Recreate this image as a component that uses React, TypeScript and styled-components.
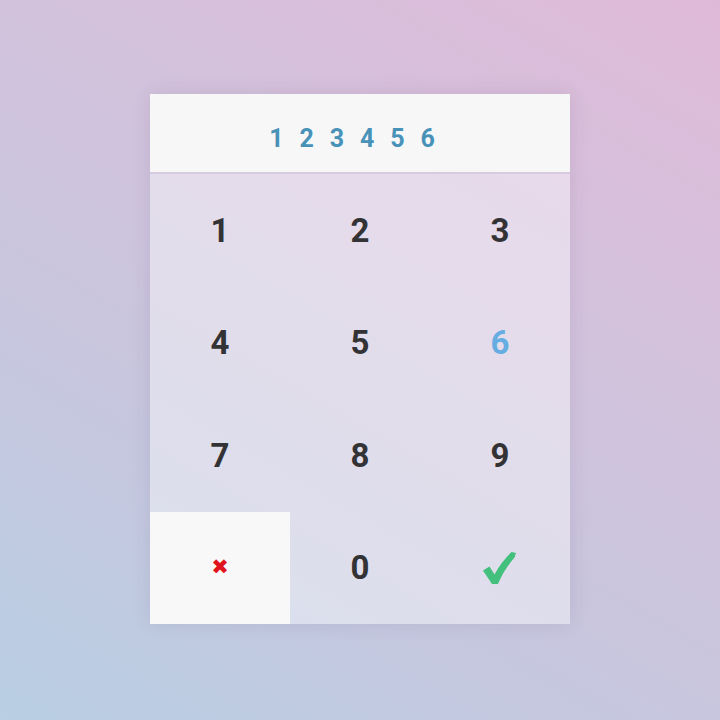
import styled, { createGlobalStyle } from "styled-components";

const GlobalStyle = createGlobalStyle`
  html, body {
    margin: 0;
    height: 100%;
  }
  body {
    font-family: Roboto, "Liberation Sans", sans-serif;
  }
`;

const Page = styled.div`
  width: 720px;
  height: 720px;
  display: flex;
  justify-content: center;
  align-items: flex-start;
  padding-top: 94px;
  box-sizing: border-box;
  background: linear-gradient(30deg, #b9cfe4 0%, #c7c6de 35%, #d3c2dc 65%, #dfbad8 100%);
`;

const Card = styled.div`
  width: 420px;
  display: flex;
  flex-direction: column;
  background: rgba(255, 255, 255, 0.42);
  box-shadow: 0 0 18px rgba(80, 60, 110, 0.12);
`;

const Display = styled.div`
  height: 80px;
  display: flex;
  align-items: center;
  justify-content: center;
  background: #f7f7f8;
  border-bottom: 2px solid #d8cbe0;
  font-size: 25px;
  font-weight: 700;
  letter-spacing: 15.9px;
  color: #4892b8;
  padding-top: 10px;
  box-sizing: border-box;
`;

const Keypad = styled.div`
  display: grid;
  grid-template-columns: repeat(3, 140px);
  grid-auto-rows: 112.5px;
`;

const Key = styled.button<{ $light?: boolean; $color?: string }>`
  border: none;
  padding: 0;
  margin: 0;
  display: flex;
  align-items: center;
  justify-content: center;
  background: ${({ $light }) => ($light ? "#f8f8f8" : "transparent")};
  color: ${({ $color }) => $color ?? "#333336"};
  font-family: Roboto, "Liberation Sans", sans-serif;
  font-size: 33px;
  font-weight: 700;
  cursor: pointer;
`;

const Glyph = styled.span<{ $size: number }>`
  font-family: "DejaVu Sans", sans-serif;
  font-size: ${({ $size }) => $size}px;
  line-height: 1;
`;

const CheckIcon = styled.svg`
  width: 35px;
  height: 34px;
  margin-left: -2px;
`;

const keys = ["1", "2", "3", "4", "5", "6", "7", "8", "9"];

export default function App() {
  return (
    <>
      <GlobalStyle />
      <Page>
        <Card>
          <Display>123456</Display>
          <Keypad>
            {keys.map((k) => (
              <Key key={k} $color={k === "6" ? "#66ade2" : undefined}>
                {k}
              </Key>
            ))}
            <Key $light $color="#e0141e">
              <Glyph $size={21}>✖</Glyph>
            </Key>
            <Key>0</Key>
            <Key $color="#43bf7e">
              <CheckIcon viewBox="0 0 35 34">
                <path
                  d="M1 19.5 L7.5 15.5 L12.5 23.5 C17 15 23 7 29.5 1 L34 2 L32.5 6.5 C26 14 20 23.5 16 33 L10 33 Z"
                  fill="currentColor"
                />
              </CheckIcon>
            </Key>
          </Keypad>
        </Card>
      </Page>
    </>
  );
}
